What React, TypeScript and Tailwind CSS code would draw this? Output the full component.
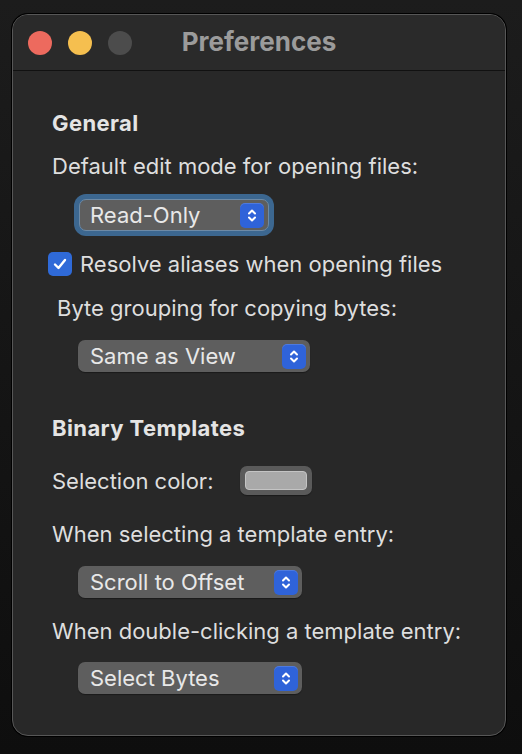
import React from 'react';

const Stepper: React.FC = () => (
  <div className="w-[24px] h-[25px] rounded-[5px] bg-[#2f63d9] flex items-center justify-center shadow-[inset_0_1px_0_rgba(255,255,255,0.15)]">
    <svg width="12" height="17" viewBox="0 0 12 17" fill="none" stroke="white" strokeWidth="2" strokeLinecap="round" strokeLinejoin="round">
      <path d="M3 6.5 L6 3.5 L9 6.5" />
      <path d="M3 10.5 L6 13.5 L9 10.5" />
    </svg>
  </div>
);

const PopUp: React.FC<{ label: string; width: string; focused?: boolean }> = ({ label, width, focused }) => (
  <div
    className={`${width} h-[32px] rounded-[7px] bg-[#5e5e5e] flex items-center justify-between pr-[4px] ${
      focused ? 'pl-[10px] border border-[#6d8aa6] shadow-[0_0_0_5px_#3c6790]' : 'pl-[12px] shadow-[0_1px_1px_rgba(0,0,0,0.35)]'
    }`}
  >
    <span className="text-[22px] text-[#e8e8e8] leading-none">{label}</span>
    <Stepper />
  </div>
);

const Label: React.FC<{ children: React.ReactNode; className?: string }> = ({ children, className }) => (
  <div className={`text-[22px] leading-[24px] text-[#dedede] ${className ?? ''}`}>{children}</div>
);

const Heading: React.FC<{ children: React.ReactNode; className?: string }> = ({ children, className }) => (
  <div className={`text-[22px] leading-[24px] font-bold tracking-[0.4px] text-[#e4e4e4] ${className ?? ''}`}>{children}</div>
);

export default function App() {
  return (
    <div
      className="w-[522px] h-[754px] bg-gradient-to-b from-[#1c1c1c] to-[#0e0e0e] pt-[14px] pl-[12px]"
      style={{ fontFamily: 'Inter, "Noto Sans", sans-serif' }}
    >
      <div className="w-[494px] h-[722px] rounded-[16px] bg-[#282828] border border-[#575757] shadow-[0_0_0_1px_#000] overflow-hidden">
        {/* title bar */}
        <div className="h-[56px] border-b border-[#111] bg-[#2a2a2a] flex items-center relative">
          <div className="flex items-center gap-[16px] pl-[15px]">
            <div className="w-[24px] h-[24px] rounded-full bg-[#ed6a5e]" />
            <div className="w-[24px] h-[24px] rounded-full bg-[#f5bf4f]" />
            <div className="w-[24px] h-[24px] rounded-full bg-[#4c4c4c]" />
          </div>
          <div className="absolute inset-0 flex items-center justify-center pb-[2px] text-[26px] font-bold text-[#9b9b9b]">
            Preferences
          </div>
        </div>

        {/* content */}
        <div className="flex flex-col pl-[39px] pt-[40px]">
          <Heading>General</Heading>
          <Label className="mt-[19px]">Default edit mode for opening files:</Label>
          <div className="mt-[21px] ml-[27px]">
            <PopUp label="Read-Only" width="w-[190px]" focused />
          </div>
          <div className="mt-[21px] ml-[-4px] flex items-center gap-[8px]">
            <div className="w-[24px] h-[24px] rounded-[5px] bg-[#2f6ad8] flex items-center justify-center">
              <svg width="16" height="16" viewBox="0 0 16 16" fill="none" stroke="white" strokeWidth="2.4" strokeLinecap="round" strokeLinejoin="round">
                <path d="M3 8.5 L6.5 12 L13 4" />
              </svg>
            </div>
            <span className="text-[22px] leading-[24px] text-[#dedede]">Resolve aliases when opening files</span>
          </div>
          <Label className="mt-[20px] ml-[5px]">Byte grouping for copying bytes:</Label>
          <div className="mt-[20px] ml-[26px]">
            <PopUp label="Same as View" width="w-[232px]" />
          </div>

          <Heading className="mt-[44px]">Binary Templates</Heading>
          <div className="mt-[26px] flex items-center h-[29px]">
            <span className="text-[22px] leading-[24px] text-[#dedede] w-[188px]">Selection color:</span>
            <div className="w-[72px] h-[29px] rounded-[7px] bg-[#5a5a5a] p-[5px] shadow-[0_1px_1px_rgba(0,0,0,0.35)]">
              <div className="w-full h-full rounded-[4px] bg-[#a9a9a9] border border-[#c4c4c4]" />
            </div>
          </div>
          <Label className="mt-[27px]">When selecting a template entry:</Label>
          <div className="mt-[20px] ml-[26px]">
            <PopUp label="Scroll to Offset" width="w-[224px]" />
          </div>
          <Label className="mt-[21px]">When double-clicking a template entry:</Label>
          <div className="mt-[19px] ml-[26px]">
            <PopUp label="Select Bytes" width="w-[224px]" />
          </div>
        </div>
      </div>
    </div>
  );
}
